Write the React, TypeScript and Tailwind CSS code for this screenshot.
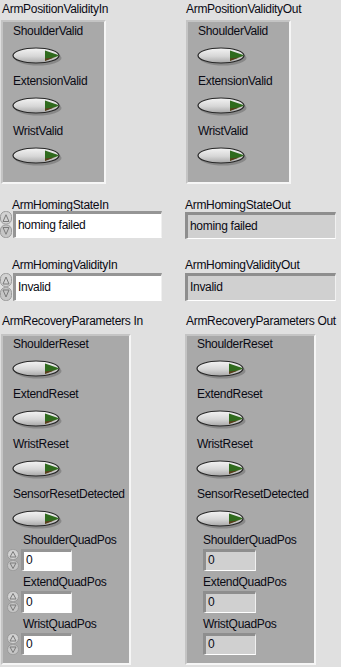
import React from "react";

const Led = () => (
  <svg width="52" height="20" viewBox="0 0 52 20" className="block">
    <defs>
      <linearGradient id="ledFace" x1="0" y1="0" x2="0" y2="1">
        <stop offset="0" stopColor="#f4f4f4" />
        <stop offset="0.55" stopColor="#d6d6d6" />
        <stop offset="1" stopColor="#a8a8a8" />
      </linearGradient>
      <clipPath id="ledClip">
        <ellipse cx="24" cy="8.5" rx="22.5" ry="7" />
      </clipPath>
    </defs>
    <ellipse cx="26" cy="11" rx="23.5" ry="7.5" fill="#6e6e6e" opacity="0.55" />
    <ellipse cx="24" cy="8.5" rx="23" ry="7.5" fill="url(#ledFace)" stroke="#262626" strokeWidth="1.2" />
    <g clipPath="url(#ledClip)">
      <path d="M33 3.5 L48 8.5 L33 13.5 Z" fill="#2f6b1d" />
      <path d="M33 11.5 L42 10.5 L48 8.5 L33 14 Z" fill="#5b3f1c" />
    </g>
  </svg>
);

const Spinner = ({ h }: { h: number }) => (
  <svg width="12" height={h} viewBox={`0 0 12 ${h}`} className="block">
    <rect x="0.5" y="0.5" width="11" height={h / 2 - 1} rx="5" fill="#d2d2d2" stroke="#9a9a9a" />
    <rect x="0.5" y={h / 2 + 0.5} width="11" height={h / 2 - 1} rx="5" fill="#c6c6c6" stroke="#9a9a9a" />
    <path d={`M3 ${h / 2 - 3} L6 ${h / 4 - 3} L9 ${h / 2 - 3} Z`} fill="none" stroke="#7a7a7a" />
    <path d={`M3 ${h / 2 + 3} L6 ${(3 * h) / 4 + 3} L9 ${h / 2 + 3} Z`} fill="none" stroke="#7a7a7a" />
  </svg>
);

const Cluster = ({ className, children }: { className: string; children: React.ReactNode }) => (
  <div
    className={`bg-[#a9a9a9] border-2 border-t-[#c4c4c4] border-l-[#c4c4c4] border-r-[#f6f6f6] border-b-[#f6f6f6] ${className}`}
  >
    {children}
  </div>
);

const BoolItem = ({ label, first }: { label: string; first?: boolean }) => (
  <div className={first ? "" : "mt-[7px]"}>
    <div className="pl-[10px] leading-[15px] whitespace-nowrap">{label}</div>
    <div className="mt-[8px] pl-[9px]">
      <Led />
    </div>
  </div>
);

const boxIn =
  "border-t-[3px] border-l-[3px] border-r border-b border-t-[#959595] border-l-[#959595] border-r-[#f0f0f0] border-b-[#ffffff] bg-white";
const boxOut =
  "border-t-[3px] border-l-[3px] border-r border-b border-t-[#8e8e8e] border-l-[#8e8e8e] border-r-[#f0f0f0] border-b-[#ffffff] bg-[#d0d0d0]";

const NumIn = ({ label }: { label: string }) => (
  <div className="pl-[4px]">
    <div className="pl-[16px] leading-[13px] whitespace-nowrap">{label}</div>
    <div className="flex items-center mt-[2px]">
      <Spinner h={22} />
      <div className={`${boxIn} w-[51px] h-[22px] ml-[2px] pl-[2px] leading-[16px]`}>0</div>
    </div>
  </div>
);

const NumOut = ({ label }: { label: string }) => (
  <div className="pl-[16px]">
    <div className="leading-[13px] whitespace-nowrap">{label}</div>
    <div className={`${boxOut} w-[53px] h-[22px] mt-[2px] pl-[2px] leading-[16px]`}>0</div>
  </div>
);

export default function App() {
  return (
    <div className="w-[341px] h-[667px] bg-[#e0e0e0] text-[#0a0a14] text-[12px] tracking-[-0.3px] font-['Liberation_Sans',Arial,sans-serif] overflow-hidden">
      {/* position validity */}
      <div className="flex pt-[2px]">
        <div className="w-[185px] shrink-0">
          <div className="pl-[2px] leading-[15px] whitespace-nowrap">ArmPositionValidityIn</div>
          <Cluster className="ml-[1px] mt-[3px] w-[105px] h-[164px] pt-[2px]">
            <BoolItem label="ShoulderValid" first />
            <BoolItem label="ExtensionValid" />
            <BoolItem label="WristValid" />
          </Cluster>
        </div>
        <div className="ml-[1px]">
          <div className="leading-[15px] whitespace-nowrap">ArmPositionValidityOut</div>
          <Cluster className="mt-[3px] w-[105px] h-[164px] pt-[2px]">
            <BoolItem label="ShoulderValid" first />
            <BoolItem label="ExtensionValid" />
            <BoolItem label="WristValid" />
          </Cluster>
        </div>
      </div>

      {/* homing state */}
      <div className="flex mt-[14px]">
        <div className="w-[185px] shrink-0">
          <div className="pl-[12px] leading-[15px] whitespace-nowrap">ArmHomingStateIn</div>
          <div className="flex items-center mt-[-2px]">
            <Spinner h={27} />
            <div className={`${boxIn} w-[149px] h-[27px] ml-[1px] pl-[2px] leading-[22px]`}>homing failed</div>
          </div>
        </div>
        <div>
          <div className="leading-[15px] whitespace-nowrap">ArmHomingStateOut</div>
          <div className={`${boxOut} w-[151px] h-[27px] mt-[-1px] pl-[2px] leading-[22px]`}>homing failed</div>
        </div>
      </div>

      {/* homing validity */}
      <div className="flex mt-[19px]">
        <div className="w-[185px] shrink-0">
          <div className="pl-[12px] leading-[15px] whitespace-nowrap">ArmHomingValidityIn</div>
          <div className="flex items-center">
            <Spinner h={28} />
            <div className={`${boxIn} w-[149px] h-[28px] ml-[1px] pl-[2px] leading-[23px]`}>Invalid</div>
          </div>
        </div>
        <div>
          <div className="leading-[15px] whitespace-nowrap">ArmHomingValidityOut</div>
          <div className={`${boxOut} w-[151px] h-[28px] pl-[2px] leading-[23px]`}>Invalid</div>
        </div>
      </div>

      {/* recovery parameters */}
      <div className="flex mt-[13px]">
        <div className="w-[185px] shrink-0">
          <div className="pl-[2px] leading-[15px] whitespace-nowrap">ArmRecoveryParameters In</div>
          <Cluster className="ml-[1px] mt-[5px] w-[130px] h-[331px] pt-[1px]">
            <BoolItem label="ShoulderReset" first />
            <BoolItem label="ExtendReset" />
            <BoolItem label="WristReset" />
            <BoolItem label="SensorResetDetected" />
            <div className="mt-[4px] flex flex-col gap-[5px]">
              <NumIn label="ShoulderQuadPos" />
              <NumIn label="ExtendQuadPos" />
              <NumIn label="WristQuadPos" />
            </div>
          </Cluster>
        </div>
        <div className="ml-[1px]">
          <div className="leading-[15px] whitespace-nowrap">ArmRecoveryParameters Out</div>
          <Cluster className="ml-[-1px] mt-[5px] w-[131px] h-[331px] pt-[1px]">
            <BoolItem label="ShoulderReset" first />
            <BoolItem label="ExtendReset" />
            <BoolItem label="WristReset" />
            <BoolItem label="SensorResetDetected" />
            <div className="mt-[4px] flex flex-col gap-[5px]">
              <NumOut label="ShoulderQuadPos" />
              <NumOut label="ExtendQuadPos" />
              <NumOut label="WristQuadPos" />
            </div>
          </Cluster>
        </div>
      </div>
    </div>
  );
}
